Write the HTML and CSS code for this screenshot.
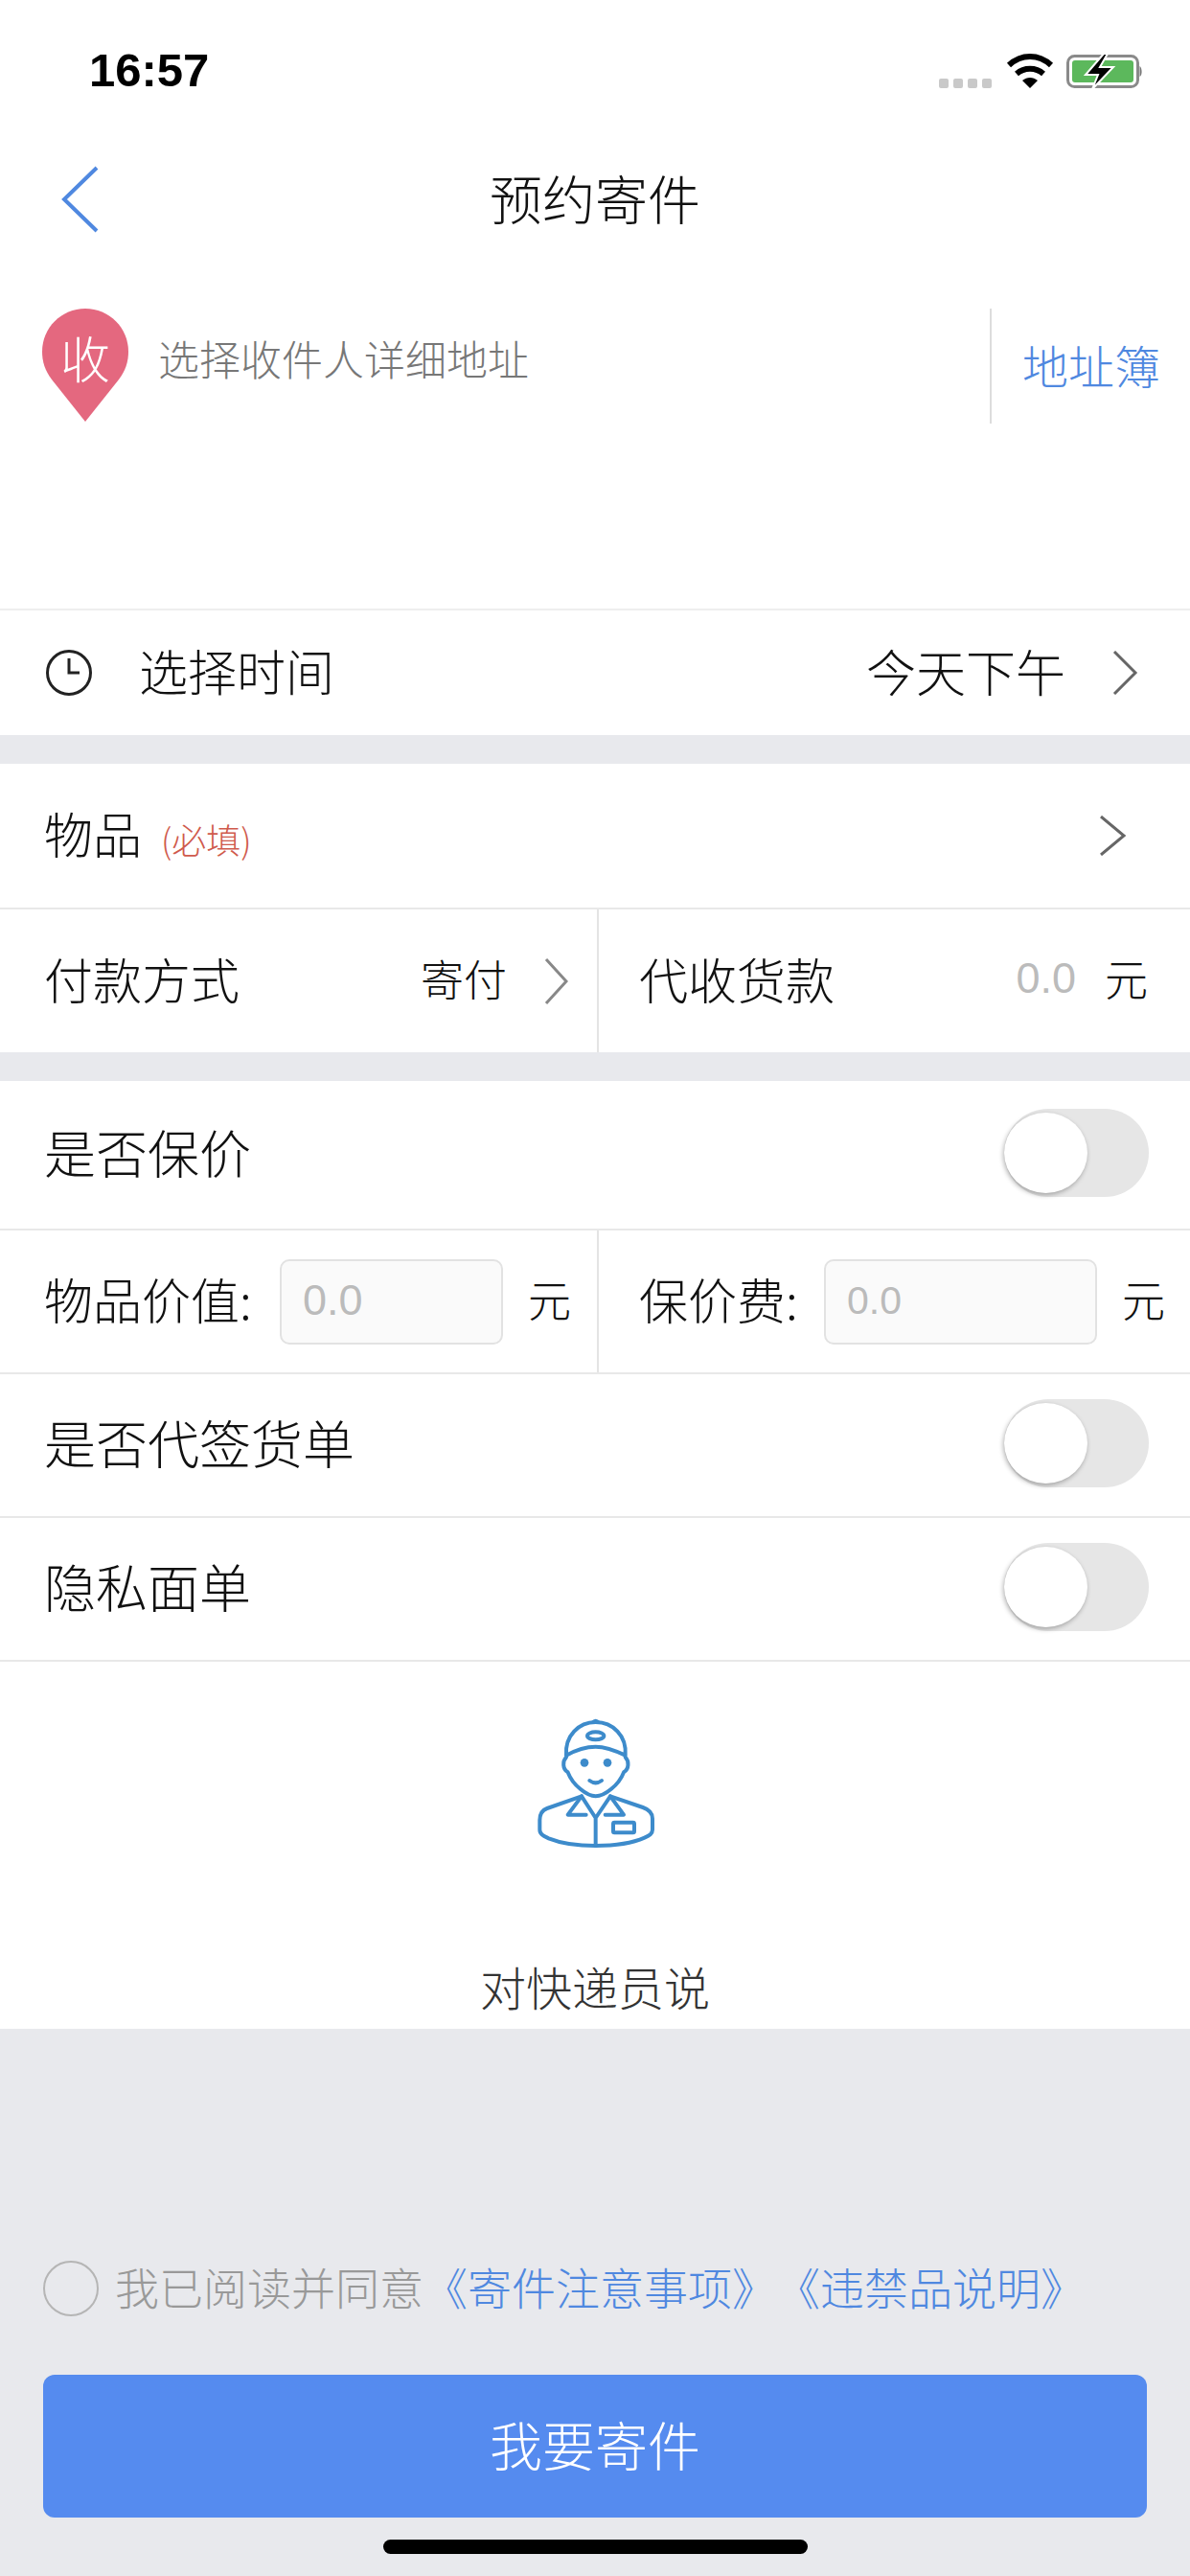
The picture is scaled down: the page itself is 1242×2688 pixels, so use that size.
FILE: index.html
```html
<!doctype html>
<html lang="zh-CN">
<head>
	<meta charset="UTF-8">
	<title>预约寄件</title>
	<link rel="stylesheet" href="styles.css">
</head>
<body>
	<div id="page">
		<div class="status">
			<span class="time">16:57</span>
			<svg class="status-icons" width="214" height="40" viewBox="0 0 214 40">
				<g fill="#c9c9c9">
					<rect x="0" y="27" width="10" height="10" rx="2"/>
					<rect x="15" y="27" width="10" height="10" rx="2"/>
					<rect x="30" y="27" width="10" height="10" rx="2"/>
					<rect x="45" y="27" width="10" height="10" rx="2"/>
				</g>
				<g fill="none" stroke="#000" stroke-width="6">
					<path d="M73 13C86 1 104 1 117 13"/>
					<path d="M81 22C89 15 101 15 109 22"/>
				</g>
				<path d="M87 29C92 25 98 25 103 29L95 37Z" fill="#000"/>
				<rect x="134.500" y="3.500" width="73" height="32" rx="7" fill="none" stroke="#8a8a8a" stroke-width="3"/>
				<rect x="139" y="8" width="64" height="23" rx="3" fill="#5cb85c"/>
				<path d="M209.500 14C212 15 212.500 24 209.500 25Z" fill="#777"/>
				<path d="M172 1L153 23L166 23L160 38L182 15L168 15L176 1Z" fill="#000" stroke="#fff" stroke-width="2"/>
			</svg>
		</div>

		<div class="nav">
			<svg class="back" width="40" height="70" viewBox="0 0 40 70"><path d="M37 2L3 35L37 68" fill="none" stroke="#4f88e0" stroke-width="4"/></svg>
			<span class="nav-title">预约寄件</span>
		</div>

		<div class="addr">
			<svg class="pin" width="90" height="118" viewBox="0 0 90 118">
				<path d="M45 118L10 74C3 65 0 55 0 45C0 20 20 0 45 0C70 0 90 20 90 45C90 55 87 65 80 74Z" fill="#e4687f"/>
				<text class="pin-text" x="45" y="73" text-anchor="middle">收</text>
			</svg>
			<span class="addr-text">选择收件人详细地址</span>
			<span class="addr-line"></span>
			<span class="addr-book">地址簿</span>
		</div>

		<div class="row row-time">
			<svg class="clock" width="48" height="48" viewBox="0 0 48 48"><circle cx="24" cy="24" r="22.500" fill="none" stroke="#222" stroke-width="3"/><path d="M24 9V24H35" fill="none" stroke="#222" stroke-width="3"/></svg>
			<span class="label time-label">选择时间</span>
			<span class="value time-value">今天下午</span>
			<svg class="arrow" width="28" height="46" viewBox="0 0 28 46"><path d="M3 1L25 23L3 45" fill="none" stroke="#666" stroke-width="3"/></svg>
		</div>

		<div class="gap"></div>

		<div class="row row-goods">
			<span class="label">物品</span>
			<span class="must">(必填)</span>
			<svg class="arrow arrow-goods" width="30" height="42" viewBox="0 0 30 42"><path d="M3 1L27 21L3 41" fill="none" stroke="#666" stroke-width="3"/></svg>
		</div>

		<div class="split split-pay">
			<div class="cell">
				<span class="label">付款方式</span>
				<span class="value pay-value">寄付</span>
				<svg class="arrow arrow-pay" width="26" height="48" viewBox="0 0 26 48"><path d="M3 1L24 24L3 47" fill="none" stroke="#888" stroke-width="3"/></svg>
			</div>
			<div class="cell cell-right">
				<span class="label">代收货款</span>
				<span class="zero">0.0</span>
				<span class="unit">元</span>
			</div>
		</div>

		<div class="gap"></div>

		<div class="row row-switch">
			<span class="label label-big">是否保价</span>
			<div class="switch"><span class="thumb"></span></div>
		</div>

		<div class="split split-fee">
			<div class="cell">
				<span class="label label-fee label-a">物品价值:</span>
				<div class="input input-a">0.0</div>
				<span class="unit">元</span>
			</div>
			<div class="cell cell-right">
				<span class="label label-fee label-b">保价费:</span>
				<div class="input input-b">0.0</div>
				<span class="unit">元</span>
			</div>
		</div>

		<div class="row row-switch2">
			<span class="label label-big">是否代签货单</span>
			<div class="switch"><span class="thumb"></span></div>
		</div>

		<div class="row row-switch2">
			<span class="label label-big">隐私面单</span>
			<div class="switch"><span class="thumb"></span></div>
		</div>

		<div class="courier">
			<svg class="courier-icon" width="124" height="139" viewBox="240 90 372 417">
				<g fill="none" stroke="#3d8bcb" stroke-width="12" stroke-linejoin="round" stroke-linecap="round">
					<path d="M330 212C325 150 370 108 422 108C475 108 520 150 515 212C480 195 450 185 422 185C395 185 360 195 330 212Z"/>
					<ellipse cx="422" cy="151" rx="26" ry="12"/>
					<path d="M330 218C318 230 318 255 335 265C350 305 395 340 422 340C450 340 495 305 510 265C527 255 527 230 515 218"/>
					<path d="M403 291Q422 305 441 291"/>
					<path d="M378 340L270 378C250 385 247 400 247 415V445C247 460 260 465 275 472C320 490 380 495 422 495C470 495 530 490 575 470C590 463 600 458 600 445V410C600 395 590 382 570 375L468 340"/>
					<path d="M378 340L335 398H392M378 340L422 408L468 340L510 398H452M422 408V495"/>
					<rect x="477" y="422" width="66" height="32" rx="4"/>
				</g>
				<circle cx="387" cy="235" r="13" fill="#3d8bcb"/>
				<circle cx="459" cy="235" r="13" fill="#3d8bcb"/>
				<path d="M408 106Q422 90 436 106Z" fill="#3d8bcb"/>
			</svg>
			<span class="courier-text">对快递员说</span>
		</div>

		<div class="footer">
			<div class="agree">
				<span class="radio"></span>
				<span class="agree-text">我已阅读并同意<a>《寄件注意事项》《违禁品说明》</a></span>
			</div>
			<div class="btn">我要寄件</div>
			<div class="home"></div>
		</div>
	</div>
</body>
</html>
```

FILE: styles.css
```css
*{
	margin: 0;
	padding: 0;
	box-sizing: border-box;
}

body{
	background-color: #fff;
	font-family: "Noto Sans CJK SC", "Liberation Sans", sans-serif;
	font-weight: 300;
	color: #111;
	text-spacing-trim: space-all;
}

svg{
	display: block;
	flex: none;
}

#page{
	width: 1242px;
	height: 2688px;
	overflow: hidden;
	display: flex;
	flex-direction: column;
}

.status{
	height: 146px;
	flex: none;
	display: flex;
	align-items: center;
	justify-content: space-between;
	padding: 0 48px 0 93px;
}

.time{
	font-family: "Liberation Sans", sans-serif;
	font-size: 49px;
	font-weight: 700;
	color: #000;
}

.status-icons{
	margin-top: 4px;
}

.nav{
	height: 124px;
	flex: none;
	position: relative;
	display: flex;
	align-items: center;
	justify-content: center;
}

.back{
	position: absolute;
	left: 64px;
	top: 27px;
}

.nav-title{
	font-size: 55px;
	line-height: 70px;
	padding-bottom: 6px;
}

.addr{
	height: 367px;
	flex: none;
	padding: 52px 0 0 44px;
	display: flex;
	align-items: flex-start;
	border-bottom: 2px solid #eee;
}

.pin-text{
	font-size: 52px;
	fill: #fff;
	font-weight: 300;
}

.addr-text{
	width: 868px;
	margin-left: 31px;
	font-size: 43px;
	line-height: 60px;
	margin-top: 21px;
	color: #777;
}

.addr-line{
	width: 2px;
	height: 120px;
	background-color: #ddd;
}

.addr-book{
	margin-left: 32px;
	font-size: 48px;
	line-height: 70px;
	margin-top: 23px;
	color: #4f88e0;
}

.row{
	display: flex;
	flex: none;
	align-items: center;
	padding: 0 46px;
}

.row-time{
	height: 130px;
	padding-right: 54px;
}

.row-goods{
	height: 152px;
	border-bottom: 2px solid #e8e8e8;
}

.row-switch{
	height: 156px;
	border-bottom: 2px solid #e8e8e8;
}

.row-switch2{
	height: 150px;
	border-bottom: 2px solid #e8e8e8;
}

.gap{
	height: 30px;
	flex: none;
	background-color: #e8e9ed;
}

.label{
	font-size: 51px;
	line-height: 70px;
	padding-bottom: 6px;
}

.label-big{
	font-size: 54px;
}

.clock{
	margin-left: 2px;
}

.time-label{
	margin-left: 49px;
}

.value{
	font-size: 52px;
	padding-bottom: 6px;
}

.time-value{
	margin-left: auto;
}

.arrow{
	margin-left: 48px;
}

.arrow-goods{
	margin-left: auto;
	margin-right: 20px;
}

.must{
	margin: 6px 0 0 20px;
	font-size: 36px;
	color: #cf5a4c;
}

.split{
	display: grid;
	flex: none;
	grid-template-columns: 623px 1fr;
}

.split-pay{
	height: 149px;
}

.split-fee{
	height: 150px;
	border-bottom: 2px solid #e8e8e8;
}

.cell{
	display: flex;
	align-items: center;
	padding-left: 46px;
}

.cell-right{
	padding-left: 42px;
	border-left: 2px solid #e4e4e4;
}

.pay-value{
	margin-left: auto;
	font-size: 45px;
}

.arrow-pay{
	margin: 0 30px 0 38px;
}

.zero{
	margin-left: auto;
	font-family: "Liberation Sans", sans-serif;
	font-weight: 400;
	font-size: 45px;
	color: #bbb;
	padding-bottom: 6px;
}

.unit{
	font-size: 45px;
	margin-left: 30px;
	margin-right: 44px;
	padding-bottom: 6px;
}

.split-fee .unit{
	margin-left: 26px;
	margin-right: 0;
}

.label-fee{
	font-size: 51px;
	white-space: nowrap;
}

.label-a{
	width: 246px;
}

.label-b{
	width: 193px;
}

.switch{
	margin-left: auto;
	margin-right: -3px;
	margin-top: -4px;
	width: 151px;
	height: 92px;
	display: flex;
	align-items: center;
	border-radius: 46px;
	background-color: #e6e6e6;
}

.thumb{
	width: 87px;
	height: 84px;
	border-radius: 50%;
	background-color: #fff;
	box-shadow: -1px 2px 5px rgba(0, 0, 0, .3);
}

.input{
	height: 89px;
	padding-left: 22px;
	background-color: #fafafa;
	border: 2px solid #e2e2e2;
	border-radius: 10px;
	font-family: "Liberation Sans", sans-serif;
	font-weight: 400;
	font-size: 45px;
	line-height: 82px;
	color: #bbb;
}

.input-a{
	width: 233px;
}

.input-b{
	width: 285px;
	font-size: 41px;
}

.courier{
	height: 383px;
	flex: none;
	padding-top: 57px;
	display: flex;
	flex-direction: column;
	align-items: center;
}

.courier-icon{
	margin-left: 3px;
}

.courier-text{
	margin-top: 112px;
	font-size: 48px;
	line-height: 60px;
	color: #333;
}

.footer{
	flex: 1;
	background-color: #e8e9ed;
	padding: 242px 45px 0;
	display: flex;
	flex-direction: column;
}

.agree{
	height: 58px;
	display: flex;
	align-items: center;
}

.radio{
	width: 58px;
	height: 58px;
	border: 2px solid #b5b5b5;
	border-radius: 50%;
}

.agree-text{
	margin-left: 17px;
	font-size: 46px;
	line-height: 58px;
	color: #999;
	white-space: nowrap;
	padding-bottom: 6px;
}

.agree-text a{
	color: #4f88e0;
}

.btn{
	height: 149px;
	margin-top: 61px;
	border-radius: 12px;
	background-color: #558bef;
	color: #fff;
	font-size: 55px;
	line-height: 143px;
	text-align: center;
}

.home{
	width: 443px;
	height: 15px;
	margin: 23px auto 0;
	border-radius: 8px;
	background-color: #000;
}
```
